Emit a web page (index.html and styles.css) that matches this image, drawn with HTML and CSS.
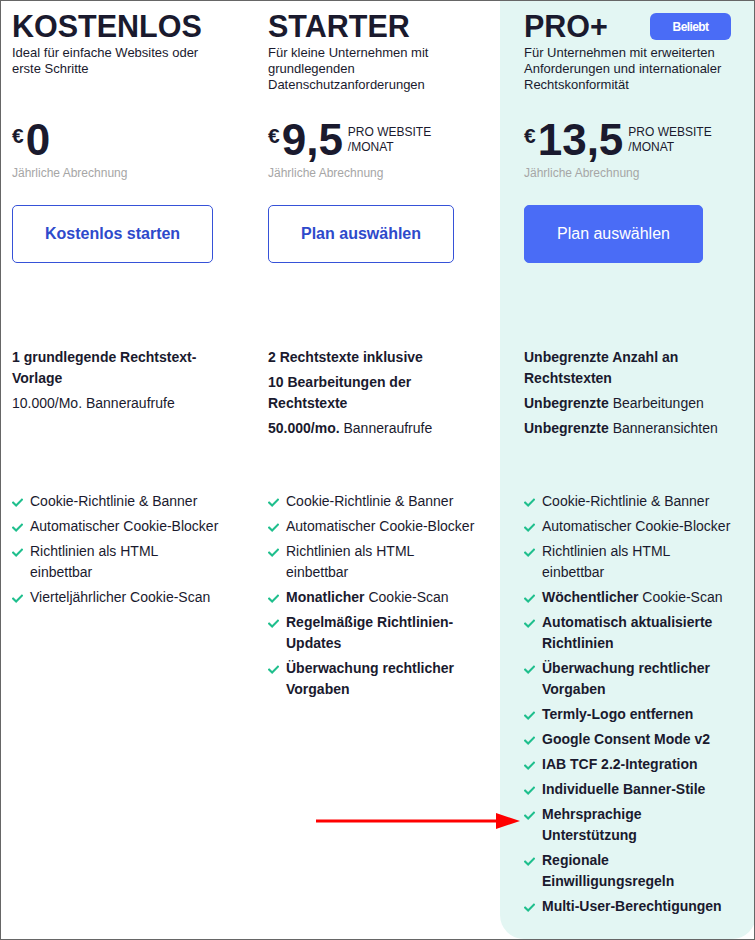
FILE: index.html
```html
<!DOCTYPE html>
<html lang="de">
<head>
<meta charset="utf-8">
<title>Preise</title>
<link rel="stylesheet" href="styles.css">
</head>
<body>
<div class="frame">
  <div class="plans">
    <section class="plan">
      <div class="plan-head"><h2 class="plan-name">KOSTENLOS</h2></div>
      <p class="plan-desc">Ideal für einfache Websites oder erste Schritte</p>
      <div class="price"><span class="cur">€</span><span class="amount">0</span></div>
      <p class="billing">Jährliche Abrechnung</p>
      <a class="btn btn-outline" href="#">Kostenlos starten</a>
      <ul class="limits">
        <li><b>1 grundlegende Rechtstext-Vorlage</b></li>
        <li>10.000/Mo. Banneraufrufe</li>
      </ul>
      <ul class="features">
        <li><svg class="check" viewBox="0 0 12 9"><path d="M1.2 4.6 L4.5 7.8 L10.8 1.4"/></svg><span>Cookie-Richtlinie &amp; Banner</span></li>
        <li><svg class="check" viewBox="0 0 12 9"><path d="M1.2 4.6 L4.5 7.8 L10.8 1.4"/></svg><span>Automatischer Cookie-Blocker</span></li>
        <li><svg class="check" viewBox="0 0 12 9"><path d="M1.2 4.6 L4.5 7.8 L10.8 1.4"/></svg><span>Richtlinien als HTML einbettbar</span></li>
        <li><svg class="check" viewBox="0 0 12 9"><path d="M1.2 4.6 L4.5 7.8 L10.8 1.4"/></svg><span>Vierteljährlicher Cookie-Scan</span></li>
      </ul>
    </section>

    <section class="plan">
      <div class="plan-head"><h2 class="plan-name">STARTER</h2></div>
      <p class="plan-desc">Für kleine Unternehmen mit grundlegenden Datenschutzanforderungen</p>
      <div class="price"><span class="cur">€</span><span class="amount">9,5</span><span class="per">PRO WEBSITE<br>/MONAT</span></div>
      <p class="billing">Jährliche Abrechnung</p>
      <a class="btn btn-outline" href="#">Plan auswählen</a>
      <ul class="limits">
        <li><b>2 Rechtstexte inklusive</b></li>
        <li><b>10 Bearbeitungen der Rechtstexte</b></li>
        <li><b>50.000/mo.</b> Banneraufrufe</li>
      </ul>
      <ul class="features">
        <li><svg class="check" viewBox="0 0 12 9"><path d="M1.2 4.6 L4.5 7.8 L10.8 1.4"/></svg><span>Cookie-Richtlinie &amp; Banner</span></li>
        <li><svg class="check" viewBox="0 0 12 9"><path d="M1.2 4.6 L4.5 7.8 L10.8 1.4"/></svg><span>Automatischer Cookie-Blocker</span></li>
        <li><svg class="check" viewBox="0 0 12 9"><path d="M1.2 4.6 L4.5 7.8 L10.8 1.4"/></svg><span>Richtlinien als HTML einbettbar</span></li>
        <li><svg class="check" viewBox="0 0 12 9"><path d="M1.2 4.6 L4.5 7.8 L10.8 1.4"/></svg><span><b>Monatlicher</b> Cookie-Scan</span></li>
        <li><svg class="check" viewBox="0 0 12 9"><path d="M1.2 4.6 L4.5 7.8 L10.8 1.4"/></svg><span><b>Regelmäßige Richtlinien-Updates</b></span></li>
        <li><svg class="check" viewBox="0 0 12 9"><path d="M1.2 4.6 L4.5 7.8 L10.8 1.4"/></svg><span><b>Überwachung rechtlicher Vorgaben</b></span></li>
      </ul>
    </section>

    <section class="plan plan-pro">
      <div class="plan-head"><h2 class="plan-name">PRO+</h2><span class="badge">Beliebt</span></div>
      <p class="plan-desc">Für Unternehmen mit erweiterten Anforderungen und internationaler Rechtskonformität</p>
      <div class="price"><span class="cur">€</span><span class="amount">13,5</span><span class="per">PRO WEBSITE<br>/MONAT</span></div>
      <p class="billing">Jährliche Abrechnung</p>
      <a class="btn btn-solid" href="#">Plan auswählen</a>
      <ul class="limits">
        <li><b>Unbegrenzte Anzahl an Rechtstexten</b></li>
        <li><b>Unbegrenzte</b> Bearbeitungen</li>
        <li><b>Unbegrenzte</b> Banneransichten</li>
      </ul>
      <ul class="features">
        <li><svg class="check" viewBox="0 0 12 9"><path d="M1.2 4.6 L4.5 7.8 L10.8 1.4"/></svg><span>Cookie-Richtlinie &amp; Banner</span></li>
        <li><svg class="check" viewBox="0 0 12 9"><path d="M1.2 4.6 L4.5 7.8 L10.8 1.4"/></svg><span>Automatischer Cookie-Blocker</span></li>
        <li><svg class="check" viewBox="0 0 12 9"><path d="M1.2 4.6 L4.5 7.8 L10.8 1.4"/></svg><span>Richtlinien als HTML einbettbar</span></li>
        <li><svg class="check" viewBox="0 0 12 9"><path d="M1.2 4.6 L4.5 7.8 L10.8 1.4"/></svg><span><b>Wöchentlicher</b> Cookie-Scan</span></li>
        <li><svg class="check" viewBox="0 0 12 9"><path d="M1.2 4.6 L4.5 7.8 L10.8 1.4"/></svg><span><b>Automatisch aktualisierte Richtlinien</b></span></li>
        <li><svg class="check" viewBox="0 0 12 9"><path d="M1.2 4.6 L4.5 7.8 L10.8 1.4"/></svg><span><b>Überwachung rechtlicher Vorgaben</b></span></li>
        <li><svg class="check" viewBox="0 0 12 9"><path d="M1.2 4.6 L4.5 7.8 L10.8 1.4"/></svg><span><b>Termly-Logo entfernen</b></span></li>
        <li><svg class="check" viewBox="0 0 12 9"><path d="M1.2 4.6 L4.5 7.8 L10.8 1.4"/></svg><span><b>Google Consent Mode v2</b></span></li>
        <li><svg class="check" viewBox="0 0 12 9"><path d="M1.2 4.6 L4.5 7.8 L10.8 1.4"/></svg><span><b>IAB TCF 2.2-Integration</b></span></li>
        <li><svg class="check" viewBox="0 0 12 9"><path d="M1.2 4.6 L4.5 7.8 L10.8 1.4"/></svg><span><b>Individuelle Banner-Stile</b></span></li>
        <li><svg class="check" viewBox="0 0 12 9"><path d="M1.2 4.6 L4.5 7.8 L10.8 1.4"/></svg><span><b>Mehrsprachige Unterstützung</b></span></li>
        <li><svg class="check" viewBox="0 0 12 9"><path d="M1.2 4.6 L4.5 7.8 L10.8 1.4"/></svg><span><b>Regionale Einwilligungsregeln</b></span></li>
        <li><svg class="check" viewBox="0 0 12 9"><path d="M1.2 4.6 L4.5 7.8 L10.8 1.4"/></svg><span><b>Multi-User-Berechtigungen</b></span></li>
      </ul>
    </section>
  </div>

  <svg class="arrow" viewBox="0 0 205 18" width="205" height="18">
    <rect x="0" y="7.5" width="184" height="3" fill="#ff0000"/>
    <polygon points="180,1 204,9 180,17" fill="#ff0000"/>
  </svg>
</div>
</body>
</html>
```

FILE: styles.css
```css
* {
  box-sizing: border-box;
}

html, body {
  margin: 0;
  padding: 0;
  background: #ffffff;
}

body {
  font-family: "Liberation Sans", Arial, Helvetica, sans-serif;
  color: #1a1a2e;
}

.frame {
  position: relative;
  width: 755px;
  height: 940px;
  border: 1px solid #666666;
  overflow: hidden;
  background: #ffffff;
}

.plans {
  display: grid;
  grid-template-columns: repeat(3, 256px);
  height: 100%;
  margin-left: -13px;
}

.plan {
  display: flex;
  flex-direction: column;
  align-items: flex-start;
  padding: 7px 22px 0 24px;
}

.plan-pro {
  background: #e3f6f3;
  border-radius: 0 0 24px 24px;
}

.plan-head {
  display: flex;
  justify-content: space-between;
  align-items: flex-start;
  width: 100%;
}

.plan-name {
  margin: 0;
  font-size: 30.5px;
  line-height: 36px;
  font-weight: 700;
  color: #1a1a2e;
}

.badge {
  display: flex;
  align-items: center;
  justify-content: center;
  width: 81px;
  height: 27px;
  margin-top: 5px;
  margin-right: 3px;
  border-radius: 6px;
  background: #4a6cf6;
  color: #ffffff;
  font-size: 12px;
  font-weight: 700;
  letter-spacing: -0.6px;
}

.plan-desc {
  margin: 1px 0 0;
  min-height: 48px;
  font-size: 13px;
  line-height: 16px;
  color: #1a1a2e;
}

.price {
  display: flex;
  align-items: flex-start;
  margin-top: 25px;
  height: 44px;
}

.cur {
  margin-top: 8px;
  margin-right: 2px;
  font-size: 21px;
  line-height: 20px;
  font-weight: 700;
}

.amount {
  font-size: 44px;
  line-height: 44px;
  font-weight: 700;
}

.per {
  margin-top: 7px;
  margin-left: 5px;
  font-size: 12px;
  line-height: 15px;
  text-transform: uppercase;
}

.billing {
  margin: 4px 0 0;
  font-size: 12px;
  line-height: 15px;
  color: #a6a6a6;
}

.btn {
  display: inline-flex;
  align-items: center;
  justify-content: center;
  height: 58px;
  margin-top: 24px;
  padding: 0 32px;
  border-radius: 5px;
  font-size: 16px;
  text-decoration: none;
  white-space: nowrap;
}

.btn-outline {
  border: 1px solid #3652d8;
  color: #2e4acb;
  font-weight: 700;
  background: #ffffff;
}

.btn-solid {
  border: 1px solid #4a6cf6;
  background: #4a6cf6;
  color: #ffffff;
  font-weight: 400;
}

.limits {
  list-style: none;
  margin: 84px 0 0;
  padding: 0;
  min-height: 92px;
  display: flex;
  flex-direction: column;
  gap: 4px;
  font-size: 14px;
  line-height: 21px;
}

.features {
  list-style: none;
  margin: 52px 0 0;
  padding: 0;
  display: flex;
  flex-direction: column;
  gap: 4px;
  font-size: 14px;
  line-height: 21px;
}

.features li {
  display: flex;
  align-items: flex-start;
}

.check {
  flex: none;
  width: 11px;
  height: 9px;
  margin-top: 7px;
  margin-right: 7px;
  fill: none;
  stroke: #1fbf8d;
  stroke-width: 2.2;
  stroke-linecap: square;
  stroke-linejoin: miter;
}

.arrow {
  position: absolute;
  left: 315px;
  top: 811px;
}
```
